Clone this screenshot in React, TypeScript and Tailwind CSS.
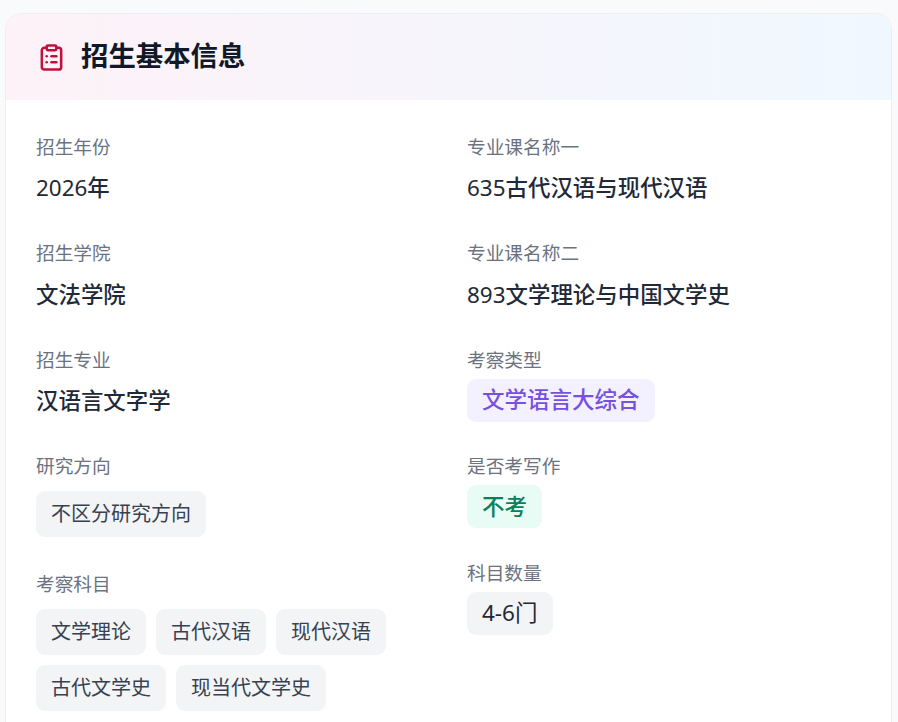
import type { ReactNode } from "react";
import { ClipboardList } from "lucide-react";

const font = "font-['Noto_Sans','Noto_Sans_CJK_SC',sans-serif]";

function Label({ children }: { children: string }) {
  return <div className="text-[18.7px] leading-[28px] text-[#6b7280]">{children}</div>;
}

function Value({ children }: { children: ReactNode }) {
  return <div className="mt-[13.3px] text-[22.45px] leading-[28px] font-medium text-[#1f2937]">{children}</div>;
}

function Tag({ children }: { children: string }) {
  return (
    <span className="inline-flex h-[46px] items-center rounded-[9px] bg-[#f3f4f6] px-[15px] text-[20px] text-[#374151]">
      {children}
    </span>
  );
}

function Badge({ children, className }: { children: string; className: string }) {
  return (
    <span className={`mt-[5px] inline-flex h-[43px] items-center self-start rounded-[9px] px-[15px] text-[22.5px] ${className}`}>
      {children}
    </span>
  );
}

export default function App() {
  return (
    <div className={`${font} h-[722px] overflow-hidden bg-[#f9fafb] pl-[5px] pr-[6px] pt-[13px]`}>
      <div className="h-[760px] overflow-hidden rounded-[16px] border border-[#eceef1] bg-white">
        <div className="flex h-[86px] items-center gap-[15px] bg-gradient-to-r from-[#fdf2f8] to-[#f0f8ff] pl-[31px]">
          <ClipboardList size={29} strokeWidth={2.1} className="text-[#be123c]" />
          <h2 className="mb-[2px] text-[27.4px] font-bold text-[#111827]">招生基本信息</h2>
        </div>
        <div className="grid grid-cols-2 gap-x-[37px] px-[30px] pt-[33px]">
          <div className="flex flex-col">
            <div className="h-[106.4px]">
              <Label>招生年份</Label>
              <Value>
                <span className="font-normal">2026</span>年
              </Value>
            </div>
            <div className="h-[106.4px]">
              <Label>招生学院</Label>
              <Value>文法学院</Value>
            </div>
            <div className="h-[106.4px]">
              <Label>招生专业</Label>
              <Value>汉语言文字学</Value>
            </div>
            <div className="h-[118px]">
              <Label>研究方向</Label>
              <div className="mt-[11px]">
                <Tag>不区分研究方向</Tag>
              </div>
            </div>
            <div>
              <Label>考察科目</Label>
              <div className="mt-[11px] flex flex-wrap gap-[10px]">
                <Tag>文学理论</Tag>
                <Tag>古代汉语</Tag>
                <Tag>现代汉语</Tag>
                <Tag>古代文学史</Tag>
                <Tag>现当代文学史</Tag>
              </div>
            </div>
          </div>
          <div className="flex flex-col">
            <div className="h-[106.4px]">
              <Label>专业课名称一</Label>
              <Value>
                <span className="font-normal">635</span>古代汉语与现代汉语
              </Value>
            </div>
            <div className="h-[106.4px]">
              <Label>专业课名称二</Label>
              <Value>
                <span className="font-normal">893</span>文学理论与中国文学史
              </Value>
            </div>
            <div className="flex h-[106.4px] flex-col">
              <Label>考察类型</Label>
              <Badge className="bg-[#f3f0ff] font-medium text-[#7750de]">文学语言大综合</Badge>
            </div>
            <div className="flex h-[106.4px] flex-col">
              <Label>是否考写作</Label>
              <Badge className="bg-[#e8fbf4] font-medium text-[#0a7f5a]">不考</Badge>
            </div>
            <div className="flex flex-col">
              <Label>科目数量</Label>
              <Badge className="bg-[#f3f4f6] text-[#1f2937]">4-6门</Badge>
            </div>
          </div>
        </div>
      </div>
    </div>
  );
}
